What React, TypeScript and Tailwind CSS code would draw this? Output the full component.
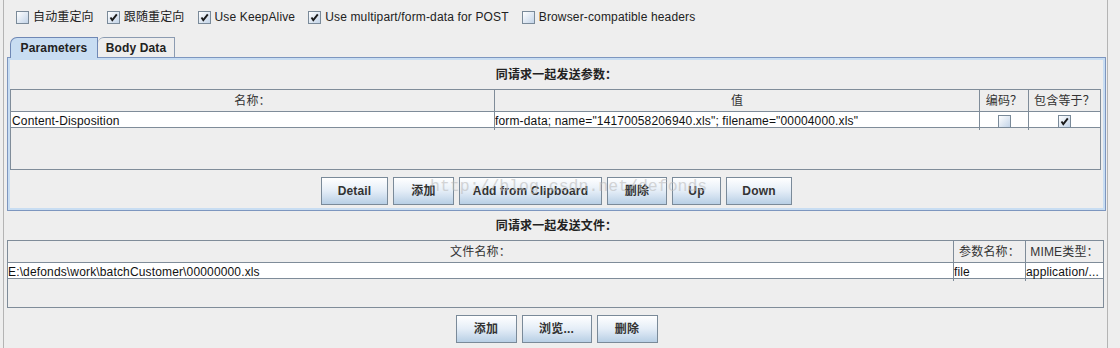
import React from 'react';

// Swing "Ocean" look: HTTP request parameters / files panel

const Check: React.FC<{ checked?: boolean }> = ({ checked }) => (
  <span className="w-[13px] h-[13px] shrink-0 border border-[#7a8a99] bg-gradient-to-br from-white to-[#c3d4e8] flex items-center justify-center">
    {checked && (
      <svg width="9" height="9" viewBox="0 0 9 9">
        <polyline points="1.5,4.5 3.3,7.2 7.8,1.3" fill="none" stroke="#1a1a1a" strokeWidth="1.9" />
      </svg>
    )}
  </span>
);

const Option: React.FC<{ label: string; checked?: boolean; first?: boolean }> = ({ label, checked, first }) => (
  <div className={`flex items-center gap-[4px] ${first ? '' : 'ml-[13px]'}`}>
    <Check checked={checked} />
    <span className="leading-[13px] text-[#222]">{label}</span>
  </div>
);

const Btn: React.FC<{ label: string; w: string }> = ({ label, w }) => (
  <button
    className={`${w} h-[28px] border border-[#7a8a99] bg-gradient-to-b from-white via-[#e4edf7] to-[#b8cfe5] font-bold text-[12px] text-[#333] flex items-center justify-center`}
  >
    {label}
  </button>
);

const App: React.FC = () => {
  return (
    <div className="w-[1120px] h-[348px] bg-[#eeeeee] overflow-hidden text-[12px] tracking-[0.15px] font-['Liberation_Sans','Noto_Sans_CJK_SC',sans-serif]">
      <div className="ml-[3px] w-[1105px] h-full border-x border-[#b4b4b4] relative">
        {/* options */}
        <div className="flex items-center pl-[12px] pt-[11px]">
          <Option first label="自动重定向" />
          <Option label="跟随重定向" checked />
          <Option label="Use KeepAlive" checked />
          <Option label="Use multipart/form-data for POST" checked />
          <Option label="Browser-compatible headers" />
        </div>

        {/* tabs */}
        <div className="mt-[12px] ml-[3px] w-[1099px]">
          <div className="flex items-end pl-[3px] h-[21px]">
            <div className="w-[88px] h-[21px] bg-[#c8ddf2] border-t border-l border-r border-[#6f88b5] rounded-tl-[7px] flex items-center justify-center font-bold text-[#222] relative z-10 -mb-[1px]">
              Parameters
            </div>
            <div className="w-[77px] h-[20px] bg-[#eeeeee] border-t border-r border-[#8b9bb1] rounded-tl-[6px] flex items-center justify-center font-bold text-[#222]">
              Body Data
            </div>
          </div>

          <div className="border border-[#7d96bf] h-[154px]">
            <div className="border-2 border-[#c8ddf2] h-full">
              <div className="h-[29px] flex items-center justify-center font-bold text-[#222]">同请求一起发送参数：</div>

              <div className="w-[1091px] h-[81px] border border-[#7f8c99]">
                <div className="grid grid-cols-[483px_485px_49px_72px] h-[22px] border-b border-[#7f8c99] text-[#333]">
                  <div className="flex items-center justify-center">名称：</div>
                  <div className="flex items-center justify-center border-l border-[#7f8c99]">值</div>
                  <div className="flex items-center justify-center border-l border-[#7f8c99]">编码？</div>
                  <div className="flex items-center justify-center border-l border-[#7f8c99]">包含等于？</div>
                </div>
                <div className="grid grid-cols-[483px_485px_49px_72px] h-[16px] bg-white border-b border-[#7f8c99] text-[#111]">
                  <div className="flex items-center pl-[1px] whitespace-nowrap">Content-Disposition</div>
                  <div className="flex items-center border-l border-[#7f8c99] whitespace-nowrap overflow-hidden">
                    form-data; name="14170058206940.xls"; filename="00004000.xls"
                  </div>
                  <div className="flex items-center justify-center border-l border-[#7f8c99]">
                    <Check />
                  </div>
                  <div className="flex items-center justify-center border-l border-[#7f8c99]">
                    <Check checked />
                  </div>
                </div>
              </div>

              <div className="mt-[7px] flex justify-center gap-[5px] relative">
                <Btn label="Detail" w="w-[67px]" />
                <Btn label="添加" w="w-[61px]" />
                <Btn label="Add from Clipboard" w="w-[143px]" />
                <Btn label="删除" w="w-[60px]" />
                <Btn label="Up" w="w-[49px]" />
                <Btn label="Down" w="w-[66px]" />
                <span className="absolute left-[420px] top-[-2px] font-['Liberation_Mono',monospace] text-[16.5px] tracking-normal text-[#bdbdbd] opacity-60 pointer-events-none whitespace-nowrap">
                  http://blog.csdn.net/defonds
                </span>
              </div>
            </div>
          </div>
        </div>

        {/* files */}
        <div className="h-[29px] flex items-center justify-center font-bold text-[#222] pl-[2px]">同请求一起发送文件：</div>

        <div className="ml-[3px] w-[1097px] h-[68px] border border-[#7f8c99]">
          <div className="grid grid-cols-[945px_72px_78px] h-[22px] border-b border-[#7f8c99] text-[#333]">
            <div className="flex items-center justify-center">文件名称：</div>
            <div className="flex items-center justify-center border-l border-[#7f8c99]">参数名称：</div>
            <div className="flex items-center justify-center border-l border-[#7f8c99]">MIME类型：</div>
          </div>
          <div className="grid grid-cols-[945px_72px_78px] h-[16px] bg-white border-b border-[#7f8c99] text-[#111]">
            <div className="flex items-center whitespace-nowrap">E:\defonds\work\batchCustomer\00000000.xls</div>
            <div className="flex items-center border-l border-[#7f8c99]">file</div>
            <div className="flex items-center border-l border-[#7f8c99] whitespace-nowrap overflow-hidden">application/...</div>
          </div>
        </div>

        <div className="mt-[7px] flex justify-center gap-[5px] pl-[2px]">
          <Btn label="添加" w="w-[61px]" />
          <Btn label="浏览..." w="w-[70px]" />
          <Btn label="删除" w="w-[61px]" />
        </div>
      </div>
    </div>
  );
};

export default App;
